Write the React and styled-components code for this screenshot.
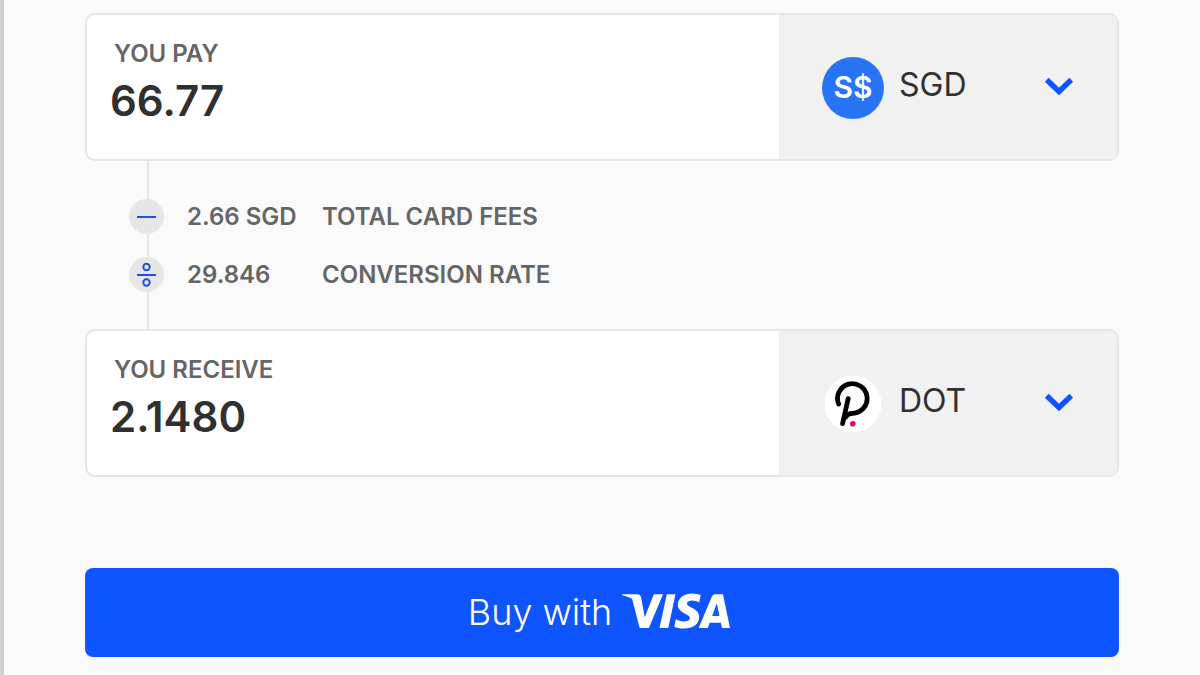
import React, { useId, useState } from "react";
import styled, { createGlobalStyle } from "styled-components";
import { SiVisa } from "react-icons/si";

const GlobalStyle = createGlobalStyle`
  *, *::before, *::after { box-sizing: border-box; }
  html, body { margin: 0; background: #fafafa; }
  body { font-family: Inter, "Liberation Sans", sans-serif; color: #303030; }
  input, select, button { font: inherit; color: inherit; }
`;

const Page = styled.main`
  min-height: 100vh;
  padding: 13px 81px 18px;
  border-left: 4px solid #cfcfcf;
  background: #fafafa;
`;

const AmountCard = styled.section`
  display: grid;
  grid-template-columns: minmax(0, 1fr) 338px;
  min-height: 148px;
  border: 2px solid #e6e6e6;
  border-radius: 10px;
  background: #ffffff;
  overflow: hidden;
`;

const AmountField = styled.div`
  display: flex;
  flex-direction: column;
  padding: 22px 23px;
`;

const FieldLabel = styled.label`
  padding-left: 4px;
  font-size: 24px;
  line-height: 33px;
  font-weight: 600;
  color: #666666;
`;

const AmountInput = styled.input`
  width: 100%;
  height: 60px;
  padding: 0;
  border: 0;
  outline: 0;
  background: transparent;
  font-size: 42px;
  font-weight: 600;
  color: #303030;
`;

const CurrencyField = styled.div`
  display: flex;
  align-items: center;
  padding: 2px 43px 0 43px;
  background: #f1f1f1;
`;

const CurrencySelect = styled.select`
  flex: 1;
  min-width: 0;
  height: 48px;
  margin: 0 0 8px 15px;
  padding: 0;
  border: 0;
  outline: 0;
  appearance: none;
  background: transparent;
  font-size: 32px;
  font-weight: 400;
  cursor: pointer;
`;

const Badge = styled.span`
  display: flex;
  align-items: center;
  justify-content: center;
  width: 62px;
  height: 62px;
  padding-bottom: 2px;
  border-radius: 50%;
  background: #2775f6;
  color: #ffffff;
  font-size: 30px;
  font-weight: 600;
`;

const TokenIcon = styled.svg`
  width: 62px;
  height: 62px;
`;

const Chevron = styled.svg`
  width: 30px;
  height: 20px;
  margin-bottom: 2px;
  pointer-events: none;
`;

const Steps = styled.ul`
  position: relative;
  display: flex;
  flex-direction: column;
  gap: 23px;
  margin: 0;
  padding: 38px 0 37px 44px;
  list-style: none;

  &::before {
    content: "";
    position: absolute;
    top: 0;
    bottom: 0;
    left: 62px;
    width: 2px;
    background: #e6e6e6;
  }
`;

const Step = styled.li`
  position: relative;
  display: grid;
  grid-template-columns: 35px 112px 1fr;
  column-gap: 23px;
  align-items: start;
  height: 35px;
  font-size: 24px;
  line-height: 36px;
  font-weight: 600;
  white-space: nowrap;
  color: #666666;
`;

const StepIcon = styled.svg`
  width: 35px;
  height: 35px;
`;

const BuyButton = styled.button`
  display: flex;
  align-items: center;
  justify-content: center;
  gap: 10px;
  width: 100%;
  height: 89px;
  margin-top: 91px;
  padding: 0 6px 2px 0;
  border: 0;
  border-radius: 8px;
  background: #0f55ff;
  color: #ffffff;
  font-size: 36px;
  font-weight: 300;
  cursor: pointer;
`;

const VisaMark = styled(SiVisa)`
  width: 108px;
  height: 36px;
  margin-bottom: 2px;
`;

function PolkadotIcon() {
  return (
    <TokenIcon viewBox="0 0 62 62" aria-hidden="true">
      <circle cx="31" cy="31" r="28.3" fill="#fff" />
      <path
        d="M16.6 31A14.8 14.8 0 1 1 30.5 40.3C27 40.3 24.8 41.8 23.4 44.5"
        fill="none"
        stroke="#000"
        strokeWidth="4.8"
        strokeLinecap="round"
      />
      <path d="M26.2 25.6L20.6 50.6" stroke="#000" strokeWidth="4.8" strokeLinecap="round" />
      <circle cx="30.8" cy="50.8" r="2.8" fill="#e6007a" />
    </TokenIcon>
  );
}

function OperatorIcon({ divide }) {
  return (
    <StepIcon viewBox="0 0 35 35" aria-hidden="true">
      <circle cx="17.5" cy="17.5" r="17.5" fill="#e6e6e6" />
      <path d="M8 18H27" stroke="#1f51dc" strokeWidth="2" />
      {divide && (
        <g fill="none" stroke="#1f51dc" strokeWidth="2">
          <circle cx="17.5" cy="10" r="3.2" />
          <circle cx="17.5" cy="25.5" r="3.2" />
        </g>
      )}
    </StepIcon>
  );
}

function AmountRow({ label, initial, currencies, icon }) {
  const id = useId();
  const [amount, setAmount] = useState(initial);
  return (
    <AmountCard>
      <AmountField>
        <FieldLabel htmlFor={id}>{label}</FieldLabel>
        <AmountInput
          id={id}
          inputMode="decimal"
          value={amount}
          onChange={(event) => setAmount(event.target.value)}
        />
      </AmountField>
      <CurrencyField>
        {icon}
        <CurrencySelect aria-label={`${label} currency`}>
          {currencies.map((code) => (
            <option key={code}>{code}</option>
          ))}
        </CurrencySelect>
        <Chevron viewBox="0 0 30 20" aria-hidden="true">
          <path d="M2.7 2.7L15 14.5L27.3 2.7" fill="none" stroke="#0f55ff" strokeWidth="5.4" />
        </Chevron>
      </CurrencyField>
    </AmountCard>
  );
}

export default function App() {
  return (
    <>
      <GlobalStyle />
      <Page>
        <AmountRow label="YOU PAY" initial="66.77" currencies={["SGD"]} icon={<Badge>S$</Badge>} />
        <Steps>
          <Step>
            <OperatorIcon />
            <span>2.66 SGD</span>
            <span>TOTAL CARD FEES</span>
          </Step>
          <Step>
            <OperatorIcon divide />
            <span>29.846</span>
            <span>CONVERSION RATE</span>
          </Step>
        </Steps>
        <AmountRow label="YOU RECEIVE" initial="2.1480" currencies={["DOT"]} icon={<PolkadotIcon />} />
        <BuyButton type="button">
          Buy with
          <VisaMark viewBox="0 8 24 8" role="img" aria-label="Visa" />
        </BuyButton>
      </Page>
    </>
  );
}
